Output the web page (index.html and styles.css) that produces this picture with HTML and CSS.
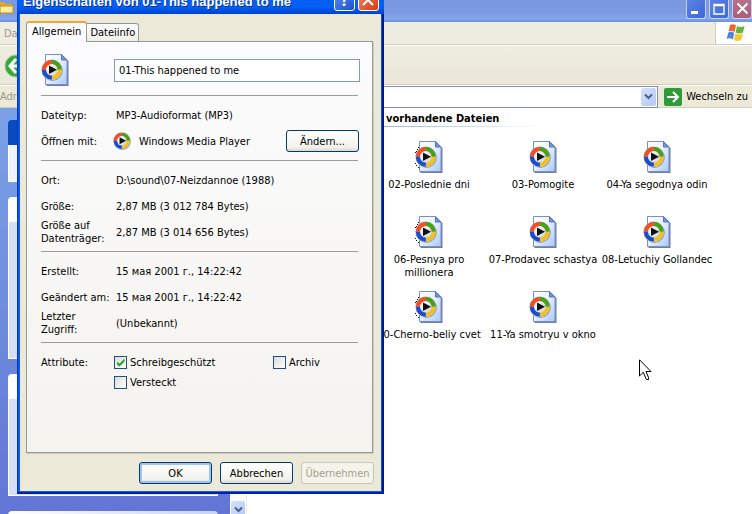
FILE: index.html
```html
<!DOCTYPE html>
<html lang="de">
<head>
<meta charset="utf-8">
<title>Eigenschaften von 01-This happened to me</title>
<link rel="stylesheet" href="styles.css">
</head>
<body>
<svg class="defs" aria-hidden="true">
  <defs>
    <linearGradient id="page" x1="0" y1="0" x2="1" y2="1"><stop offset="0" stop-color="#fff"/><stop offset=".45" stop-color="#eaf2ff"/><stop offset="1" stop-color="#a8c8fa"/></linearGradient>
    <linearGradient id="disc" x1="0" y1="0" x2="1" y2="1"><stop offset="0" stop-color="#fff"/><stop offset="1" stop-color="#c9d4e0"/></linearGradient>
    <symbol id="wmp" viewBox="0 0 22 22">
      <circle cx="11.4" cy="11.5" r="10.4" fill="#46557b" opacity=".55"/>
      <circle cx="10.8" cy="10.8" r="10.4" fill="#b9bfca"/>
      <path d="M10.8 10.8V.8A10 10 0 0 0 .8 10.8Z" fill="#ee4f24"/>
      <path d="M10.8 10.8H20.8A10 10 0 0 0 10.8 .8Z" fill="#4c9d17"/>
      <path d="M10.8 10.8V20.8A10 10 0 0 0 20.8 10.8Z" fill="#f2c022"/>
      <path d="M10.8 10.8H.8A10 10 0 0 0 10.8 20.8Z" fill="#1a4ccb"/>
      <circle cx="10.8" cy="10.8" r="5.8" fill="url(#disc)"/>
      <path d="M8 6.5 16 10.8 8 15Z" fill="#111"/>
    </symbol>
    <symbol id="media" viewBox="0 0 28 32">
      <path d="M5.500 2.500H23L27.500 7V32H5.500Z" fill="#3b4674" opacity=".7"/>
      <path d="M4.500 .5H20.500L26 6V30.500H4.500Z" fill="url(#page)" stroke="#7690cd"/>
      <path d="M20.500 .5V6H26Z" fill="#6f93df" stroke="#5877c0"/>
      <use href="#wmp" x="0" y="5" width="22" height="22"/>
    </symbol>
    <symbol id="media-dots" viewBox="0 0 28 32">
      <path d="M3 6h1v1H3zM2 8h1v1H2zM1 10h1v1H1zM0 11h1v1H0zM0 22h1v1H0zM1 24h1v1H1zM3 26h1v1H3z" fill="#111"/>
      <use href="#media" width="28" height="32"/>
    </symbol>
  </defs>
</svg>

<main class="explorer">
  <header class="titlebar">
    <svg class="folder" width="14" height="14" viewBox="0 0 14 14"><path d="M0 2h4l2 2h6v9H0z" fill="#e2a72d"/><path d="M0 6h12l1 -1v8H0z" fill="#fff0a0" stroke="#c58b1d"/></svg>
    <div class="window-buttons">
      <button class="wbtn" type="button" aria-label="Minimieren"><svg width="18" height="18" viewBox="0 0 18 18"><path d="M4 11h7v3H4z" fill="#fff"/></svg></button>
      <button class="wbtn" type="button" aria-label="Maximieren"><svg width="18" height="18" viewBox="0 0 18 18"><path d="M4 4.500h10V14H4zM4 5.500h10" fill="none" stroke="#fff" stroke-width="1.400"/></svg></button>
      <button class="wbtn wbtn-close-muted" type="button" aria-label="Fenster schließen"><svg width="18" height="18" viewBox="0 0 18 18"><path d="M4.500 3.500l10 10M14.500 3.500l-10 10" stroke="#fff" stroke-width="2"/></svg></button>
    </div>
  </header>
  <nav class="menubar"><span class="muted">Datei</span>
    <div class="brand"><svg width="20" height="20" viewBox="0 0 20 20">
      <path d="M4 2Q7 .5 10 2.500L8.500 9Q5.500 7.500 2.500 8.500Z" fill="#ec6530"/>
      <path d="M11 3Q14.500 5 18.500 3L17 9.500Q13 11.500 9.500 9.500Z" fill="#69b43a"/>
      <path d="M2.300 9.500Q5.500 8 8.300 10L6.800 16.500Q4 14.500 .7 16Z" fill="#4d85dc"/>
      <path d="M9.300 10.500Q13 12.500 16.800 10.500L15.300 17Q11.500 19 7.800 17Z" fill="#f8c732"/></svg></div>
  </nav>
  <div class="toolbar">
    <button class="back" type="button" aria-label="Zurück"><svg width="24" height="24" viewBox="0 0 24 24"><circle cx="12" cy="12" r="11" fill="#37a938" stroke="#a3c69c"/><path d="M12 5l-6 7 6 7M7 12h11" fill="none" stroke="#fff" stroke-width="3"/></svg></button>
  </div>
  <div class="addressbar">
    <label class="muted" for="address">Adresse</label>
    <div class="combo">
      <input id="address" type="text">
      <button class="drop" type="button" aria-label="Liste öffnen"><svg width="9" height="7" viewBox="0 0 9 7"><path d="M1 1.500l3.500 3.500L8 1.500" fill="none" stroke="#4a6084" stroke-width="2"/></svg></button>
    </div>
    <button class="go" type="button"><svg width="18" height="18" viewBox="0 0 18 18"><rect width="18" height="18" rx="2" fill="#2f9a37"/><path d="M3 9h11M9 4l5 5-5 5" fill="none" stroke="#fff" stroke-width="2"/></svg>Wechseln zu</button>
  </div>
  <div class="content">
    <aside class="tasks">
      <section class="task task-first"><div class="task-head"></div><div class="task-body"></div></section>
      <section class="task task-second"><div class="task-head"></div><div class="task-body"></div></section>
      <section class="task task-third"><div class="task-head"></div><div class="task-body"></div></section>
      <section class="task"><div class="task-head"></div></section>
    </aside>
    <div class="scrollbar"><button class="scroll-down" type="button" aria-label="Nach unten"><svg width="9" height="7" viewBox="0 0 9 7"><path d="M1 1.500l3.500 3.500L8 1.500" fill="none" stroke="#4a6084" stroke-width="2"/></svg></button></div>
    <section class="files">
      <h2>vorhandene Dateien</h2>
      <ul class="file-grid">
        <li><svg class="file-icon"><use href="#media-dots"/></svg>02-Poslednie dni</li>
        <li><svg class="file-icon"><use href="#media"/></svg>03-Pomogite</li>
        <li><svg class="file-icon"><use href="#media"/></svg>04-Ya segodnya odin</li>
        <li><svg class="file-icon"><use href="#media-dots"/></svg>06-Pesnya pro<br>millionera</li>
        <li><svg class="file-icon"><use href="#media"/></svg>07-Prodavec schastya</li>
        <li><svg class="file-icon"><use href="#media"/></svg>08-Letuchiy Gollandec</li>
        <li><svg class="file-icon"><use href="#media-dots"/></svg>10-Cherno-beliy cvet</li>
        <li><svg class="file-icon"><use href="#media"/></svg>11-Ya smotryu v okno</li>
      </ul>
    </section>
  </div>
</main>

<form class="dialog">
  <header class="dialog-title">
    <h1>Eigenschaften von 01-This happened to me</h1>
    <button class="dbtn" type="button" aria-label="Hilfe">?</button>
    <button class="dbtn dbtn-close" type="button" aria-label="Schließen"><svg width="19" height="19" viewBox="0 0 19 19"><path d="M4 4l10 10M14 4L4 14" stroke="#fff" stroke-width="2"/></svg></button>
  </header>
  <div class="dialog-body">
    <div class="tabs" role="tablist">
      <button class="tab tab-active" type="button" role="tab" aria-selected="true">Allgemein</button>
      <button class="tab" type="button" role="tab" aria-selected="false">Dateiinfo</button>
    </div>
    <div class="panel">
      <div class="name-row">
        <svg class="file-icon"><use href="#media"/></svg>
        <input class="name" type="text" aria-label="Dateiname" value="01-This happened to me">
      </div>
      <div class="group">
        <div class="row"><span>Dateityp:</span><span class="value">MP3-Audioformat (MP3)</span></div>
        <div class="row"><span>Öffnen mit:</span><span class="opener"><svg width="18" height="18"><use href="#wmp"/></svg>Windows Media Player<button class="btn change" type="button">Ändern...</button></span></div>
      </div>
      <div class="group">
        <div class="row"><span>Ort:</span><span class="value">D:\sound\07-Neizdannoe (1988)</span></div>
        <div class="row"><span>Größe:</span><span class="value">2,87 MB (3 012 784 Bytes)</span></div>
        <div class="row"><span>Größe auf<br>Datenträger:</span><span class="value">2,87 MB (3 014 656 Bytes)</span></div>
      </div>
      <div class="group">
        <div class="row"><span>Erstellt:</span><span class="value">15 мая 2001 г., 14:22:42</span></div>
        <div class="row"><span>Geändert am:</span><span class="value">15 мая 2001 г., 14:22:42</span></div>
        <div class="row"><span>Letzter<br>Zugriff:</span><span class="value">(Unbekannt)</span></div>
      </div>
      <div class="group attributes">
        <span>Attribute:</span>
        <label><input type="checkbox" checked>Schreibgeschützt</label>
        <label><input type="checkbox">Archiv</label>
        <label class="hidden-flag"><input type="checkbox">Versteckt</label>
      </div>
    </div>
    <footer class="actions">
      <button class="btn btn-default" type="submit">OK</button>
      <button class="btn" type="button">Abbrechen</button>
      <button class="btn" type="button" disabled>Übernehmen</button>
    </footer>
  </div>
</form>

<svg class="cursor" width="13" height="22" viewBox="0 0 13 22" aria-hidden="true"><path d="M.5 .8V17L4.300 13.300 7.300 20.500H9.500V18.500L7 12.500H12Z" fill="#fff" stroke="#000"/></svg>
</body>
</html>
```
FILE: styles.css
```css
* { box-sizing: border-box; }

body {
  margin: 0;
  height: 100vh;
  overflow: hidden;
  position: relative;
  background: #fff;
  color: #000;
  font: 11px/13px "DejaVu Sans Condensed", "Liberation Sans", sans-serif;
}

button, input { font: inherit; color: inherit; margin: 0; }
button { padding: 0; border: 0; background: none; }
svg { display: block; flex: none; }
.defs { position: absolute; width: 0; height: 0; }
.muted { color: #9b998c; }

.explorer { display: flex; flex-direction: column; height: 100vh; }

.titlebar {
  display: flex;
  justify-content: space-between;
  height: 22px;
  background: linear-gradient(#7b98e2, #7c9ae4 60%, #83a8ec 85%, #6c8ede);
}
.window-buttons { display: flex; gap: 3px; }
.wbtn {
  width: 20px;
  height: 19px;
  border: 1px solid #c3d2f5;
  border-top: 0;
  border-radius: 0 0 3px 3px;
  background: linear-gradient(135deg, #5b83e4, #3e67da);
}
.wbtn-close-muted { background: linear-gradient(#b57188, #ae5d78); }

.menubar {
  display: flex;
  justify-content: space-between;
  align-items: center;
  height: 23px;
  padding-left: 4px;
  border-bottom: 1px solid #cfccbd;
  background: #efede2;
}
.brand {
  display: flex;
  align-items: center;
  justify-content: center;
  width: 37px;
  height: 22px;
  padding-left: 4px;
  border-left: 1px solid #cfccbd;
  background: #fff;
}

.toolbar {
  height: 40px;
  padding: 8px 4px;
  border-top: 1px solid #fff;
  border-bottom: 1px solid #d2cfbf;
  background: linear-gradient(#efeddf, #ebe8d8);
}

.addressbar {
  display: flex;
  align-items: center;
  height: 23px;
  border-top: 1px solid #fff;
  border-bottom: 1px solid #d2cfbf;
  background: #ece9d8;
}
.combo {
  display: flex;
  flex: 1;
  height: 22px;
  margin: 0 6px 0 8px;
  border: 1px solid #7f8da6;
  background: #fff;
}
.combo input { flex: 1; min-width: 0; border: 0; padding: 0 4px; background: #fff; }
.drop, .scroll-down {
  display: flex;
  align-items: center;
  justify-content: center;
  width: 15px;
  margin: 1px;
  border-radius: 2px;
  background: linear-gradient(135deg, #d5e1fd, #b4c8f6);
}
.go { display: flex; align-items: center; gap: 4px; padding-right: 4px; }

.content { display: flex; flex: 1; min-height: 0; overflow: hidden; }
.tasks {
  flex: none;
  width: 230px;
  padding: 12px 12px 0 8px;
  background: linear-gradient(#7ba2e7, #6375d6);
  overflow: hidden;
}
.task { margin-bottom: 15px; }
.task-head { height: 25px; border-radius: 4px 4px 0 0; background: linear-gradient(90deg, #fff, #c6d3f7); }
.task-body { border: 1px solid #fff; border-top: 0; background: #d6dff7; }
.task-first .task-head { background: #0a49c0; }
.task-first .task-body { height: 37px; background: #eff3ff; }
.task-second .task-body { height: 137px; }
.task-third .task-body { height: 97px; }

.scrollbar {
  display: flex;
  flex: none;
  align-items: flex-end;
  width: 17px;
  border-right: 1px solid #eeede5;
  background: #fbfbf8;
}
.scroll-down { height: 17px; margin: 0 1px -4px; }

.files { flex: 1; min-width: 0; padding-left: 125px; }
.files h2 {
  width: 171px;
  margin: 0;
  padding: 4px 0 1px 14px;
  font-size: 11px;
  line-height: 13px;
  white-space: nowrap;
  border-bottom: 1px solid;
  border-image: linear-gradient(90deg, #8cb0f0, #fff) 1;
}
.file-grid {
  display: grid;
  grid-template-columns: repeat(auto-fill, 114px);
  grid-auto-rows: 75px;
  margin: 0;
  padding: 14px 0 0;
  list-style: none;
  text-align: center;
}
.file-grid li { white-space: nowrap; }
.file-icon { width: 28px; height: 32px; }
.file-grid .file-icon { margin: 0 auto 5px; }

.dialog {
  position: absolute;
  top: -15px;
  left: 17px;
  width: 367px;
  padding: 0 3px 3px;
  background: linear-gradient(90deg, #0046d5, #0f5ff2 3px, #0f5ff2 364px, #00188f);
  box-shadow: inset 0 -2px #0020a8, inset -2px 0 #00188f, inset 1px 0 #0038c8;
}
.dialog-title {
  display: flex;
  align-items: flex-end;
  gap: 3px;
  height: 29px;
  margin: 0 -3px;
  padding: 0 5px 3px 6px;
  background: linear-gradient(#0058ee, #0560f5 75%, #0042d0);
  color: #fff;
}
.dialog-title h1 {
  flex: 1;
  margin: 0;
  font: bold 13px/18px "Liberation Sans", sans-serif;
  white-space: nowrap;
  text-shadow: 1px 1px #0a2f8c;
}
.dbtn {
  width: 21px;
  height: 21px;
  border: 1px solid #fff;
  border-radius: 3px;
  background: linear-gradient(135deg, #5c8cf2, #1c50d0);
  color: #fff;
  font: bold 16px/19px "Open Sans", sans-serif;
}
.dbtn-close { background: linear-gradient(135deg, #ee8a6c, #d23a12); }

.dialog-body { padding: 7px 8px 7px 6px; background: #ece9d8; }
.tabs { display: flex; align-items: flex-end; }
.tab {
  height: 18px;
  padding: 0 3px;
  border: 1px solid #919b9c;
  border-left: 0;
  border-bottom: 0;
  border-radius: 0 3px 0 0;
  background: linear-gradient(#fff, #f0efe6);
}
.tab-active {
  position: relative;
  z-index: 1;
  height: 21px;
  margin-bottom: -1px;
  padding: 0 5px 2px;
  border-left: 1px solid #919b9c;
  border-top: 2px solid #f2a72f;
  border-radius: 3px 3px 0 0;
  background: #fcfcfe;
}

.panel {
  min-height: 412px;
  padding: 0 12px 0 14px;
  border: 1px solid #919b9c;
  background: linear-gradient(#fcfcfe, #f4f3ee);
  box-shadow: 1px 1px #d0cdbe;
}
.name-row { display: flex; align-items: center; height: 53px; padding: 3px 0 0; }
.name-row .file-icon { margin: 0 45px 0 0; }
.name {
  flex: 1;
  min-width: 0;
  height: 23px;
  padding: 0 4px;
  border: 1px solid #7f9db9;
  background: #fff;
}
.group { margin-right: 2px; padding: 6px 0; border-top: 1px solid #9d9c98; }
.row {
  display: grid;
  grid-template-columns: 72px 1fr;
  align-items: center;
  height: 26px;
  white-space: nowrap;
}
.value { padding-left: 3px; }
.opener { display: flex; align-items: center; gap: 8px; }

.btn {
  width: 73px;
  height: 22px;
  border: 1px solid #003c74;
  border-radius: 3px;
  background: linear-gradient(#fff, #f3f2ec 80%, #dcd8cc);
}
.btn-default { box-shadow: inset 0 0 0 2px #a5c1f0; }
.btn:disabled { border-color: #c9c7ba; background: #f5f4ea; color: #a1a192; }
.change { margin: 0 -1px 0 auto; }

.attributes {
  display: grid;
  grid-template-columns: 73px 159px 1fr;
  grid-auto-rows: 20px;
  align-items: center;
  padding-top: 9px;
}
.attributes label { display: flex; align-items: center; gap: 3px; padding-top: 1px; }
.hidden-flag { grid-column: 2; }
.attributes input {
  appearance: none;
  display: grid;
  place-items: center;
  width: 13px;
  height: 13px;
  border: 1px solid #1c5180;
  background: linear-gradient(135deg, #dcdcd7, #fff);
}
.attributes input:checked::before {
  content: "";
  width: 8px;
  height: 8px;
  background: #21a121;
  clip-path: polygon(0 35%, 37% 65%, 100% 0, 100% 38%, 37% 100%, 0 70%);
}

.actions { display: flex; justify-content: flex-end; gap: 8px; margin: 9px -1px 0 0; }

.cursor { position: absolute; left: 639px; top: 359px; }
```
